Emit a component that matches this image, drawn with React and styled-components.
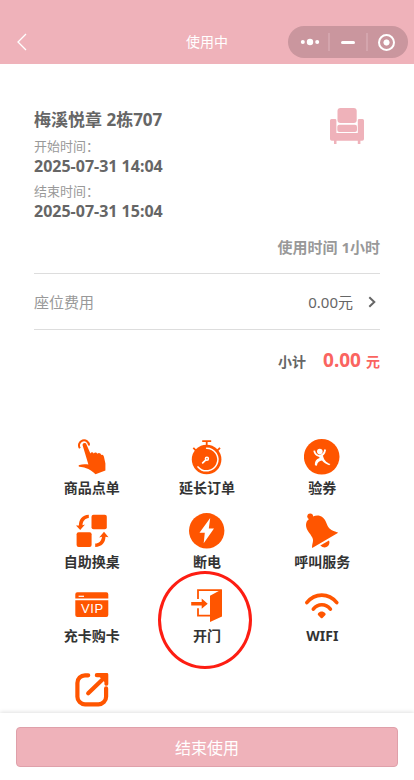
import React from "react";
import styled, { createGlobalStyle } from "styled-components";

const actions = [
  { label: "商品点单", icon: <TapIcon /> },
  { label: "延长订单", icon: <TimerIcon /> },
  { label: "验券", icon: <CouponIcon /> },
  { label: "自助换桌", icon: <SwapIcon /> },
  { label: "断电", icon: <PowerIcon /> },
  { label: "呼叫服务", icon: <BellIcon /> },
  { label: "充卡购卡", icon: <VipIcon /> },
  { label: "开门", icon: <DoorIcon />, marked: true },
  { label: "WIFI", icon: <WifiIcon /> },
];

function App() {
  return (
    <Page>
      <GlobalStyle />
      <Header>
        <Back viewBox="0 0 10 18">
          <path d="M9 1 1 9l8 8" />
        </Back>
        <HeaderTitle>使用中</HeaderTitle>
        <Capsule>
          <CapsuleItem>
            <svg width="20" height="8" viewBox="0 0 20 8" fill="#fff">
              <circle cx="2.8" cy="4" r="2" />
              <circle cx="10" cy="4" r="3.2" />
              <circle cx="17.2" cy="4" r="2" />
            </svg>
          </CapsuleItem>
          <Divider />
          <CapsuleItem>
            <Minus />
          </CapsuleItem>
          <Divider />
          <CapsuleItem>
            <Target />
          </CapsuleItem>
        </Capsule>
      </Header>

      <Order>
        <Summary>
          <div>
            <Room>梅溪悦章 2栋707</Room>
            <TimeLabel>开始时间：</TimeLabel>
            <Time>2025-07-31 14:04</Time>
            <TimeLabel>结束时间：</TimeLabel>
            <Time>2025-07-31 15:04</Time>
          </div>
          <Sofa viewBox="0 0 34 36">
            <rect x="7.5" y="0" width="19.2" height="15" rx="3" />
            <rect x="7.3" y="16.7" width="19.7" height="7.3" rx="2" />
            <path d="M1.5 11H5a1.4 1.4 0 0 1 1.4 1.4V25h21.4V12.4A1.4 1.4 0 0 1 29.2 11h3.3a1.5 1.5 0 0 1 1.5 1.5V31a1.8 1.8 0 0 1-1.8 1.8h-1.8V36h-2.6v-3.2H6.5V36H4v-3.2H1.8A1.8 1.8 0 0 1 0 31V12.5A1.5 1.5 0 0 1 1.5 11Z" />
          </Sofa>
        </Summary>
        <Duration>使用时间 1小时</Duration>
        <Fee>
          <FeeName>座位费用</FeeName>
          <FeeValue>0.00元</FeeValue>
          <Chevron viewBox="0 0 8 12">
            <path d="m1.3 1.2 5 4.8-5 4.8" />
          </Chevron>
        </Fee>
        <Total>
          <TotalLabel>小计</TotalLabel>
          <TotalValue>0.00</TotalValue>
          <TotalUnit>元</TotalUnit>
        </Total>
      </Order>

      <Grid>
        {actions.map((item) => (
          <Action key={item.label}>
            {item.icon}
            <ActionLabel>{item.label}</ActionLabel>
            {item.marked && <Mark />}
          </Action>
        ))}
      </Grid>
      <Grid $extra>
        <Action>
          <ShareIcon />
        </Action>
      </Grid>

      <Footer>
        <EndButton type="button">结束使用</EndButton>
      </Footer>
    </Page>
  );
}

function TapIcon() {
  return (
    <Icon viewBox="0 0 36 36">
      <path
        d="M5.9 9.2A5 5 0 1 1 15 6.5"
        fill="none"
        stroke="#ff5500"
        strokeWidth="2"
      />
      <path d="M8.6 6.3C8.3 3.8 11.8 3.3 12.5 5.6L16.4 14.4C17.2 12.9 19 13.1 19.7 14.5C20.7 13 22.6 13.3 23.3 14.8C24.6 13.2 26.8 14 27.2 15.9C28.8 15.2 29.8 16.3 30 18L31.4 24.5V31.5L21.5 35.2C18.5 32.3 15.5 30 11.5 29C10 28 8 28.4 5.5 27.8C4.3 27.3 4.4 26.1 5.4 25.9C8 25.2 11.5 25.1 14.4 25.6Z" />
    </Icon>
  );
}

function TimerIcon() {
  return (
    <Icon viewBox="0 0 36 36">
      <circle cx="17.6" cy="20.5" r="14.8" />
      <path
        d="M13.2 2.2h9M17.7 2.5v5M4.3 8.9l3 3M31 8.9l-3 3"
        stroke="#ff5500"
        strokeWidth="1.8"
      />
      <g fill="none" stroke="#fff" strokeWidth="1.5" strokeLinecap="round">
        <path d="M17.6 9.2A11.3 11.3 0 1 1 9 27.9" />
        <circle cx="17.9" cy="19.8" r="1.5" />
        <path d="m16.6 21.2-2.9 2.6" strokeWidth="1.8" />
      </g>
    </Icon>
  );
}

function CouponIcon() {
  return (
    <Icon viewBox="0 0 36 36">
      <circle cx="17.7" cy="17.8" r="17.8" />
      <circle cx="15.8" cy="12.6" r="2.8" fill="#fff" />
      <path
        d="M10.2 11.6Q11 16 15 17Q20.3 16.5 21.2 10.5"
        fill="none"
        stroke="#fff"
        strokeWidth="1.8"
      />
      <path d="m14.5 16.3 4.3-.4c.8 4.5 3 7.3 7.6 9.2l-1.2 1.2c-3.2-1.2-5.5-2.7-7.2-4.7-2.8.5-4.7 2-5.1 5.1l-2-.5c-.1-4 1.3-6 4.7-7.2Z" fill="#fff" />
    </Icon>
  );
}

function SwapIcon() {
  return (
    <Icon viewBox="0 0 36 36">
      <rect x="17.5" y="1.7" width="15.3" height="14.6" rx="2" />
      <rect x="2.6" y="19.3" width="15" height="14.6" rx="2" />
      <path d="M14.8 1.7V5.1C11 5.5 8.9 8 8.5 12.2L11 11.5L6.2 16.9L2 12.5L4.9 12.4C5 6 8 2.2 14.8 1.7Z" />
      <path d="M21.2 34V30.6C25 30.2 27.5 28 28 23.7L25.2 24.5L30 18.8L34.5 24.2L31.5 23.8C31.2 30 28 33.5 21.2 34Z" />
    </Icon>
  );
}

function PowerIcon() {
  return (
    <Icon viewBox="0 0 36 36">
      <circle cx="17.7" cy="17.8" r="17.7" />
      <path d="M21.2 5 10.5 19.8h5.3L14.7 30.2 25 15.6h-5.2Z" fill="#fff" />
    </Icon>
  );
}

function BellIcon() {
  return (
    <Icon viewBox="0 0 36 36">
      <circle cx="6.2" cy="3.3" r="2.9" />
      <path d="M5 6C9 3 14 .8 18.8 4.5C22.5 7.5 22.5 12.5 25.5 15.5C28 18 31 18.3 34.2 19.8L8.2 35.1C7.5 31 10.3 28.5 8.3 24.5C6 20 2 17 2 12C2 9.5 3 7.3 5 6Z" />
      <path d="M16.3 32.6 25 27.4C27 33 21 37 16.3 32.6Z" />
    </Icon>
  );
}

function VipIcon() {
  return (
    <Icon viewBox="0 0 36 36">
      <path d="M3.3 5.3h29a2 2 0 0 1 2 2v4.3h-33V7.3a2 2 0 0 1 2-2ZM1.3 13.2h33V28a2 2 0 0 1-2 2h-29a2 2 0 0 1-2-2Z" />
      <path d="M4.6 9.3H10" stroke="#fff" strokeWidth="1.2" />
      <VipText x="18.3" y="26.2">
        VIP
      </VipText>
    </Icon>
  );
}

function DoorIcon() {
  return (
    <Icon viewBox="0 0 36 36">
      <path
        d="M9 12V3.1h23.5M9 21.2v7.5h12"
        fill="none"
        stroke="#ff5500"
        strokeWidth="1.8"
      />
      <path d="M33 2.2v27.2L21 35.1V8.8ZM2.2 14.9h10.5v-3.3l6 5.1-6 5.1v-3.2H2.2Z" />
    </Icon>
  );
}

function WifiIcon() {
  return (
    <Icon viewBox="0 0 36 36">
      <g fill="none" stroke="#ff5500" strokeWidth="3.6" strokeLinecap="round">
        <path d="M2.8 15.6C11 5.6 24.5 5.6 32.8 15.6" />
        <path d="M9.3 22.1C14 16.3 21.7 16.3 26.4 22.1" />
      </g>
      <path d="M14.1 26.2C16.2 24 19.2 24 21.3 26.2Q22.2 27.2 21.2 28.2L18.5 30.9Q17.7 31.6 16.9 30.9L14.2 28.2Q13.2 27.2 14.1 26.2Z" />
    </Icon>
  );
}

function ShareIcon() {
  return (
    <Icon viewBox="0 0 36 36">
      <g fill="none" stroke="#ff5500" strokeWidth="4.2" strokeLinecap="round">
        <path d="M14.2 4.3H11A7.6 7.6 0 0 0 3.4 11.9V25.7A7.6 7.6 0 0 0 11 33.3H24.5A7.6 7.6 0 0 0 32.1 25.7V17.4" />
        <path d="M14.2 22.3 28 9" />
      </g>
      <path d="M22.8 2.1h10.1a1.4 1.4 0 0 1 1.4 1.4v9.7a2 2 0 0 1-3.9 0V11L25.8 6.2h-3a2 2 0 0 1 0-4.1Z" />
    </Icon>
  );
}

const GlobalStyle = createGlobalStyle`
  * {
    box-sizing: border-box;
  }
  body {
    margin: 0;
    background: #fff;
    font-family: "Noto Sans", "Noto Sans CJK SC", sans-serif;
  }
  svg {
    display: block;
  }
`;
const Page = styled.div`
  display: flex;
  flex-direction: column;
  height: 780px;
  overflow: hidden;
`;
const Header = styled.header`
  display: grid;
  grid-template-columns: 1fr auto 1fr;
  align-items: center;
  height: 64px;
  flex: none;
  padding: 20px 6px 0 17px;
  background: #efb2ba;
`;
const Back = styled.svg`
  width: 10px;
  height: 18px;
  fill: none;
  stroke: #fff;
  stroke-width: 1.3;
`;
const HeaderTitle = styled.div`
  color: #fff;
  font-size: 14px;
  line-height: 20px;
  padding-right: 11px;
`;
const Capsule = styled.div`
  display: flex;
  align-items: center;
  justify-self: end;
  width: 120px;
  height: 32px;
  padding: 0 4px;
  border-radius: 16px;
  background: #ca969e;
`;
const CapsuleItem = styled.div`
  flex: 1;
  display: flex;
  justify-content: center;
`;
const Divider = styled.div`
  width: 2px;
  height: 18px;
  background: #d4a5ad;
`;
const Minus = styled.div`
  width: 14px;
  height: 3px;
  border-radius: 2px;
  background: #fff;
`;
const Target = styled.div`
  width: 17px;
  height: 17px;
  border: 2px solid #fff;
  border-radius: 50%;
  background: radial-gradient(circle, #fff 2.7px, transparent 3.4px);
`;
const Order = styled.section`
  flex: none;
  height: 375px;
  padding: 44px 34px 0;
`;
const Summary = styled.div`
  display: flex;
  justify-content: space-between;
  padding-right: 16px;
`;
const Room = styled.div`
  margin-bottom: 5px;
  color: #666;
  font-size: 17px;
  font-weight: 700;
  line-height: 24px;
`;
const TimeLabel = styled.div`
  color: #999;
  font-size: 13px;
  line-height: 19px;
`;
const Time = styled.div`
  margin-bottom: 6px;
  color: #666;
  font-size: 16px;
  font-weight: 700;
  line-height: 20px;
`;
const Sofa = styled.svg`
  width: 34px;
  height: 36px;
  fill: #efb2ba;
`;
const Duration = styled.div`
  margin-top: 10px;
  padding-bottom: 16px;
  border-bottom: 1px solid #ddd;
  color: #999;
  font-size: 15px;
  font-weight: 700;
  line-height: 20px;
  text-align: right;
`;
const Fee = styled.div`
  display: flex;
  align-items: center;
  height: 56px;
  padding-right: 4px;
  border-bottom: 1px solid #ddd;
  font-size: 15px;
`;
const FeeName = styled.span`
  flex: 1;
  color: #999;
`;
const FeeValue = styled.span`
  color: #666;
`;
const Chevron = styled.svg`
  width: 8px;
  height: 12px;
  margin-left: 15px;
  fill: none;
  stroke: #666;
  stroke-width: 2;
`;
const Total = styled.div`
  display: flex;
  align-items: baseline;
  justify-content: flex-end;
  padding-top: 17px;
  color: #fa6460;
  font-weight: 700;
  line-height: 26px;
`;
const TotalLabel = styled.span`
  margin-right: 17px;
  color: #666;
  font-size: 14px;
`;
const TotalValue = styled.span`
  font-size: 19px;
`;
const TotalUnit = styled.span`
  margin-left: 5px;
  font-size: 14px;
`;
const Grid = styled.div`
  display: grid;
  grid-template-columns: repeat(3, 1fr);
  grid-auto-rows: 74px;
  flex: none;
  padding: ${(props) => (props.$extra ? "10px" : "0")} 34px 0;
`;
const Action = styled.div`
  position: relative;
  display: flex;
  flex-direction: column;
  align-items: center;
`;
const Icon = styled.svg`
  width: 36px;
  height: 36px;
  flex: none;
  fill: #ff5500;
`;
const VipText = styled.text`
  fill: #fff;
  font-family: "Liberation Sans", sans-serif;
  font-size: 13px;
  letter-spacing: 0.6px;
  text-anchor: middle;
`;
const ActionLabel = styled.div`
  margin-top: 3px;
  color: #333;
  font-size: 14px;
  font-weight: 700;
  line-height: 20px;
`;
/* hand-drawn style ring over the door action */
const Mark = styled.div`
  position: absolute;
  top: -16px;
  left: 9px;
  width: 94px;
  height: 98px;
  border: 3px solid #fd1d12;
  border-radius: 50%;
`;
const Footer = styled.footer`
  position: fixed;
  right: 0;
  bottom: 0;
  left: 0;
  height: 67px;
  padding: 14px 16px 0;
  background: #fff;
  box-shadow: 0 -1px 4px rgba(0, 0, 0, 0.12);
`;
const EndButton = styled.button`
  width: 100%;
  height: 40px;
  border: 1px solid #dfa0aa;
  border-radius: 4px;
  background: #efb2ba;
  color: #fff;
  font-family: inherit;
  font-size: 16px;
`;

export default App;
